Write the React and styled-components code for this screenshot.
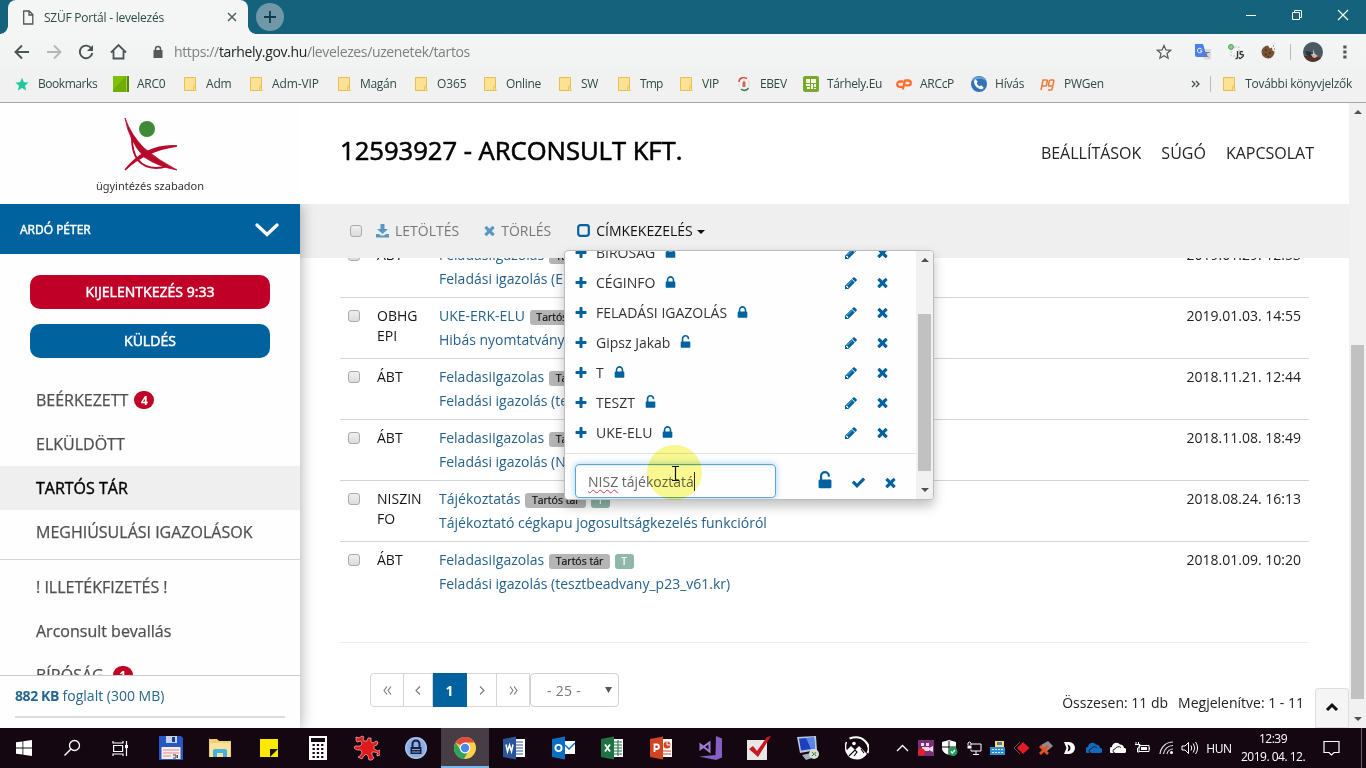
import React from 'react';
import styled, { createGlobalStyle, css } from 'styled-components';

const BLUE = '#0063a0';
const RED = '#c00027';

const Global = createGlobalStyle`
  * { box-sizing: border-box; }
  html, body { margin: 0; padding: 0; overflow: hidden; }
  body { font-family: "Open Sans", "Noto Sans", sans-serif; font-size: 14px; color: #222; background: #fff; }
  svg { display: block; flex: none; }
`;

const heavy = css`-webkit-text-stroke: ${p => p.$stroke || 0.5}px currentColor;`;

const Screen = styled.div`
  width: 1366px; height: 768px; display: flex; flex-direction: column; overflow: hidden; position: relative;
`;

/* ---------- browser window ---------- */
const TabStrip = styled.div`
  height: 34px; flex: none; background: #14627b; display: flex; align-items: stretch; padding-left: 8px;
`;
const Tab = styled.div`
  width: 240px; background: #f4f5f5; border-radius: 8px 8px 0 0; display: flex; align-items: center;
  padding: 0 10px 0 14px; font-size: 12px; color: #2c4a44; position: relative;
  &::before, &::after {
    content: ''; position: absolute; bottom: 0; width: 8px; height: 8px;
  }
  &::before { left: -8px; background: radial-gradient(circle at 0 0, #14627b 7.5px, #f4f5f5 8px); }
  &::after { right: -8px; background: radial-gradient(circle at 100% 0, #14627b 7.5px, #f4f5f5 8px); }
`;
const TabTitle = styled.span`flex: 1; margin-left: 10px; letter-spacing: -0.23px; white-space: nowrap;`;
const NewTab = styled.div`
  width: 28px; height: 28px; border-radius: 50%; background: #7098a9; margin: 3px 0 0 8px;
  display: flex; align-items: center; justify-content: center;
`;
const WindowControls = styled.div`
  margin-left: auto; display: flex; height: 29px; align-items: center; margin-right: 17px; gap: 34px;
`;
const AddressBar = styled.div`
  height: 35px; flex: none; background: linear-gradient(#f4f5f5, #f1f2f2); display: flex; align-items: center; padding: 0 8px 0 14px;
`;
const NavIcons = styled.div`display: flex; gap: 16px; align-items: center;`;
const SiteInfo = styled.div`width: 24px; margin-left: 18px; display: flex; justify-content: center;`;
const Url = styled.div`
  margin-left: 4px; font-size: 14px; color: #7c8080; letter-spacing: -0.36px; white-space: nowrap;
  b { font-weight: 400; color: #202526; }
`;
const Extensions = styled.div`margin-left: auto; display: flex; align-items: center; height: 35px;`;
const ExtSlot = styled.div`width: ${p => p.$w}px; display: flex; align-items: center; justify-content: center;`;
const Divider = styled.i`width: 1px; height: 16px; background: #b9bcbc; flex: none;`;
const BookmarkBar = styled.div`
  height: 34px; flex: none; background: #f1f1f1; border-bottom: 1px solid #a5a5a5; display: flex;
  padding: 0 0 4px 14px; align-items: center; font-size: 12px; color: #2d4b45;
`;
const Bookmark = styled.div`
  width: ${p => (p.$w ? p.$w + 'px' : 'auto')}; display: flex; align-items: center; white-space: nowrap;
  letter-spacing: ${p => p.$ls || -0.3}px; flex: none;
  svg { margin-right: 8px; }
`;
const BookmarkTail = styled.div`
  margin-left: auto; display: flex; align-items: center; padding-right: 14px; gap: 10px;
`;

/* ---------- portal ---------- */
const Viewport = styled.div`flex: 1; display: flex; min-height: 0; background: #fff;`;
const Sidebar = styled.aside`
  width: 300px; flex: none; display: flex; flex-direction: column; position: relative; z-index: 2; background: #fefefe;
`;
const LogoBox = styled.div`
  height: 101px; flex: none; display: flex; flex-direction: column; align-items: center; padding-top: 14px;
  svg { margin-left: 2px; }
`;
const LogoText = styled.div`
  font-family: "Noto Sans", sans-serif; font-size: 11px; color: #333; line-height: 14px; margin-top: 6px;
`;
const SideBody = styled.div`
  flex: 1; min-height: 0; display: flex; flex-direction: column; box-shadow: 0 0 14px rgba(0,0,0,.35); clip-path: inset(0 -20px 0 0);
  background: #fefefe;
`;
const UserBar = styled.div`
  height: 50px; flex: none; background: ${BLUE}; color: #fff; font-size: 12px; display: flex; align-items: center;
  justify-content: space-between; padding: 1px 21px 0 20px; ${heavy}
`;
const SideScroll = styled.div`flex: 1; min-height: 0; overflow: hidden; padding-top: 21px;`;
const SideButton = styled.div`
  margin: 0 30px 15px; height: 34px; border-radius: 10px; background: ${p => p.$bg}; color: #fff; display: flex;
  align-items: center; justify-content: center; font-size: 14px; letter-spacing: 0.04px; padding-bottom: 1px; ${heavy}
`;
const SideList = styled.div`
  padding: ${p => p.$top}px 0 ${p => p.$bottom || 0}px; border-bottom: ${p => (p.$line ? '1px solid #d5d5d5' : '0')};
`;
const SideItem = styled.div`
  height: 44px; padding-left: 36px; display: flex; align-items: center; font-size: 16px; white-space: nowrap;
  color: ${p => (p.$on ? '#000' : '#505050')}; background: ${p => (p.$on ? '#efefef' : 'none')}; ${heavy}
`;
const Count = styled.span`
  min-width: 20px; height: 18px; border-radius: 9px; background: ${RED}; color: #fff; font-size: 12px; font-weight: 700;
  display: flex; align-items: center; justify-content: center; margin-left: ${p => p.$gap}px; -webkit-text-stroke: 0;
`;
const Quota = styled.div`
  height: 53px; flex: none; border-top: 1px solid #ccc; padding: 10px 15px 0; font-size: 14px; color: #27668f; line-height: 20px;
  b { font-weight: 700; letter-spacing: -0.4px; }
`;
const QuotaBar = styled.div`height: 2px; margin-top: 10px; background: #dcdcdc;`;

const Main = styled.main`flex: 1; min-width: 0; display: flex; flex-direction: column; position: relative;`;
const Header = styled.header`
  height: 101px; flex: none; display: flex; align-items: center; justify-content: space-between; padding: 0 35px 4px 40px;
`;
const Title = styled.h1`margin: 0; padding-bottom: 2px; font-weight: 400; font-size: 25.6px; color: #000; white-space: nowrap; ${heavy}`;
const TopLinks = styled.nav`display: flex; gap: 20px; font-size: 16px; color: #222; padding-top: 3px;`;
const ActionBar = styled.div`
  height: 54px; flex: none; background: #efefef; display: flex; align-items: center; padding: 0 0 1px 50px; color: #757575;
`;
const Action = styled.div`
  display: flex; align-items: center; margin-left: ${p => p.$ml}px; color: ${p => (p.$on ? '#111' : '#777')};
  svg { margin-right: ${p => p.$gap}px; }
`;
const Caret = styled.i`
  border: 4px solid transparent; border-top-color: #111; border-bottom: 0; margin-left: 4px; margin-top: 3px;
`;
const Check = styled.span`
  width: 12px; height: 12px; border: 1px solid #aaa; border-radius: 3px; background: linear-gradient(#efefef, #dcdcdc); flex: none;
`;
const ListArea = styled.section`flex: 1; min-height: 0; overflow: hidden; padding: 0 40px;`;
const Rows = styled.div`margin-top: -21px; height: 406px; border-bottom: 1px solid #ececec;`;
const Row = styled.div`
  height: 61px; display: flex; padding: 8px 8px 0; border-bottom: ${p => (p.$last ? '0' : '1px solid #d4d4d4')};
`;
const Sender = styled.div`
  width: 62px; margin-left: 17px; line-height: 20px; color: #151515; word-break: break-all; padding-right: 14px; white-space: pre-line;
`;
const RowCheck = styled(Check)`margin-top: 4px;`;
const Subject = styled.div`flex: 1; color: #27628c; line-height: 24px; margin-top: -2px; white-space: nowrap;`;
const SubjectLine = styled.div`display: flex; height: 24px; align-items: center;`;
const Tag = styled.span`
  height: 15px; border-radius: 3px; margin: 3px 0 0 5px; background: ${p => (p.$green ? '#8fb8a9' : '#b5b5b5')};
  color: ${p => (p.$green ? '#fff' : '#111')}; font-size: 10.5px; line-height: 15px; padding: 0 6.5px; -webkit-text-stroke: .2px currentColor;
`;
const When = styled.div`line-height: 20px; color: #222;`;
const Footer = styled.div`display: flex; padding: 30px 0 0 30px; align-items: flex-start;`;
const Pager = styled.div`
  display: flex; height: 34px; border: 1px solid #d6d6d6; border-radius: 4px 0 0 4px; background: #fff;
`;
const PageCell = styled.div`
  width: ${p => p.$w}px; display: flex; align-items: center; justify-content: center; color: #777;
  border-right: ${p => (p.$end ? '0' : '1px solid #d6d6d6')};
  ${p => p.$on && css`background: ${BLUE}; color: #fff; margin: -1px 0; font-weight: 700; border-color: ${BLUE};`}
`;
const PageSize = styled.div`
  width: 89px; height: 34px; border: 1px solid #d0d0d0; border-radius: 4px; display: flex; align-items: center; color: #777;
  padding: 1px 6px 0 16px; justify-content: space-between; letter-spacing: .3px;
  svg { margin-bottom: 2px; }
`;
const Totals = styled.div`margin: 20px 5px 0 auto; display: flex; gap: 10px; line-height: 20px; color: #222;`;
const ToTop = styled.div`
  position: absolute; right: 0; bottom: 0; width: 34px; height: 40px; background: #f5f5f5; border: 1px solid #dedede;
  border-radius: 3px 3px 0 0; display: flex; align-items: center; justify-content: center; padding-bottom: 3px;
`;
const ScrollTrack = styled.div`
  width: ${p => p.$w}px; flex: none; background: #f1f1f1; display: flex; flex-direction: column; align-items: center;
  padding: ${p => p.$pad};
`;
const Arrow = styled.i`
  border: 4px solid transparent; ${p => (p.$down
    ? css`border-top-color: #505050; border-bottom: 0;`
    : css`border-bottom-color: #505050; border-top: 0;`)}
`;
const Thumb = styled.div`width: 13px; height: ${p => p.$h}px; margin: ${p => p.$top}px 0 auto; background: #c1c1c1;`;

/* ---------- label drop-down ---------- */
const Menu = styled.div`
  position: absolute; left: 264px; top: 147px; width: 370px; height: 250px; background: #fefefe; border: 1px solid #bcbcbc;
  border-radius: 4px; box-shadow: 0 6px 12px rgba(0,0,0,.25); display: flex; z-index: 3; overflow: hidden;
`;
const MenuBody = styled.div`flex: 1; min-width: 0; height: 248px; overflow: hidden;`;
const MenuItems = styled.div`margin-top: -13px; padding-bottom: 5px; border-bottom: 1px solid #e2e2e2;`;
const MenuItem = styled.div`
  height: 30px; display: flex; align-items: center; padding: 0 26px 1px 9px; color: #333; white-space: nowrap;
`;
const MenuLabel = styled.span`margin: 0 8px 0 8px; padding-bottom: 1px;`;
const MenuTools = styled.span`margin-left: auto; display: flex; gap: 17px; align-items: center;`;
const EditLine = styled.div`display: flex; align-items: center; padding: 10px 18px 0 10px;`;
const Field = styled.div`
  width: 201px; height: 34px; border: 1px solid #5ba6d8; border-radius: 4px; color: #666; padding: 7px 0 0 12px;
  box-shadow: 0 0 7px rgba(102,175,233,.6), inset 0 1px 1px rgba(0,0,0,.08); line-height: 20px; white-space: nowrap; display: flex;
  u { text-decoration: underline wavy #d23a4a 1px; text-underline-offset: 2px; }
`;
const TextCaret = styled.i`width: 1px; height: 19px; background: #333;`;
const EditTools = styled.div`margin-left: auto; display: flex; gap: 17px; align-items: center; padding-top: 3px;`;
const OpenLock = styled.span`padding-bottom: 4px; margin-right: -1px;`;
const Halo = styled.div`
  position: absolute; left: 647px; top: 445px; width: 55px; height: 55px; border-radius: 50%; z-index: 5;
  background: rgb(250,249,145); mix-blend-mode: multiply;
`;
const Pointer = styled.div`position: absolute; left: 670px; top: 465px; z-index: 6;`;

/* ---------- taskbar ---------- */
const Taskbar = styled.div`height: 40px; flex: none; background: #150711; display: flex; align-items: stretch; color: #fff;`;
const Slot = styled.div`
  width: ${p => p.$w}px; display: flex; align-items: center; justify-content: center; flex: none;
  ${p => p.$on && css`background: #463d45; border-bottom: 2px solid #76b9ed; padding-top: 2px;`}
`;
const Tray = styled.div`display: flex; margin-left: 9px;`;
const Lang = styled.div`width: 36px; display: flex; align-items: center; justify-content: center; font-size: 12px; letter-spacing: -.3px;`;
const Clock = styled.div`
  width: 72px; display: flex; flex-direction: column; align-items: center; justify-content: center; font-size: 12px;
  line-height: 18px; letter-spacing: -.5px; white-space: nowrap;
`;
const ShowDesktop = styled.div`margin-left: auto; width: 5px; border-left: 1px solid #6a6168;`;

/* ---------- icons ---------- */
const SOLID = {
  times: 'M1490 1322q0 40-28 68l-136 136q-28 28-68 28t-68-28l-294-294-294 294q-28 28-68 28t-68-28l-136-136q-28-28-28-68t28-68l294-294-294-294q-28-28-28-68t28-68l136-136q28-28 68-28t68 28l294 294 294-294q28-28 68-28t68 28l136 136q28 28 28 68t-28 68l-294 294 294 294q28 28 28 68z',
  plus: 'M1600 736v192q0 40-28 68t-68 28h-416v416q0 40-28 68t-68 28h-192q-40 0-68-28t-28-68v-416h-416q-40 0-68-28t-28-68v-192q0-40 28-68t68-28h416v-416q0-40 28-68t68-28h192q40 0 68 28t28 68v416h416q40 0 68 28t28 68z',
  lock: 'M640 768h512v-192q0-106-75-181t-181-75-181 75-75 181v192zm832 96v576q0 40-28 68t-68 28h-960q-40 0-68-28t-28-68v-576q0-40 28-68t68-28h32v-192q0-184 132-316t316-132 316 132 132 316v192h32q40 0 68 28t28 68z',
  unlock: 'M1376 768q40 0 68 28t28 68v576q0 40-28 68t-68 28h-960q-40 0-68-28t-28-68v-576q0-40 28-68t68-28h32v-320q0-185 131.5-316.5t316.5-131.5 316.5 131.5 131.5 316.5q0 26-19 45t-45 19h-64q-26 0-45-19t-19-45q0-106-75-181t-181-75-181 75-75 181v320h736z',
  pencil: 'M491 1536l91-91-235-235-91 91v107h128v128h107zm523-928q0-22-22-22-10 0-17 7l-542 542q-7 7-7 17 0 22 22 22 10 0 17-7l542-542q7-7 7-17zm-54-192l416 416-832 832h-416v-416zm683 96q0 53-37 90l-166 166-416-416 166-165q36-38 90-38 53 0 91 38l235 234q37 39 37 91z',
  check: 'M1671 566q0 40-28 68l-724 724-136 136q-28 28-68 28t-68-28l-136-136-362-362q-28-28-28-68t28-68l136-136q28-28 68-28t68 28l294 295 656-657q28-28 68-28t68 28l136 136q28 28 28 68z',
};
const Solid = ({ name, size = 14, color = BLUE }) => (
  <svg width={size} height={size} viewBox="0 0 1792 1792" fill={color}><path d={SOLID[name]} /></svg>
);
const Svg = ({ w = 16, h, children, box }) => (
  <svg width={w} height={h || w} viewBox={box || `0 0 ${w} ${h || w}`} fill="none">{children}</svg>
);
const Line = ({ d, c = '#fff', s = 1, ...rest }) => <path d={d} stroke={c} strokeWidth={s} {...rest} />;

const Folder = () => (
  <Svg><path d="M2.500 1.500h11v13h-11z" fill="#fde293" stroke="#e5bf52" /><path d="M11.500 14.500v-4l1-1 1.800 5z" fill="#fde293" stroke="#e5bf52" strokeWidth=".8" /></Svg>
);
const BookmarkIcon = {
  star: <Svg><path d="M8 1.800l1.900 4.400 4.700.4-3.600 3.200 1.100 4.700L8 12l-4.100 2.500L5 9.800 1.400 6.600l4.700-.4z" fill="#1fc9a0" /></Svg>,
  arc: <Svg><path d="M0 0h16v16H0z" fill="#6fae00" /><path d="M0 0h13L0 14z" fill="#7fc008" /><path d="M13 0h1v16h-1z" fill="#a5cf5c" /><path d="M14 0h2v16h-2z" fill="#528a00" /></Svg>,
  ebev: <Svg><path d="M3 6C3 2 7 .5 11 2.500" stroke="#d2463c" strokeWidth="1.400" /><path d="M12 4c1.500 3 1.500 5 .5 7M3 7c-.5 2 0 3 .5 4" stroke="#dcdedc" strokeWidth="1.200" /><path d="M5 13c2 2 5.500 2 7.500-1" stroke="#2f8b57" strokeWidth="1.600" /><path d="M6.500 6.500L8 4.500l1.500 2V11h-3z" fill="#cf6a58" /></Svg>,
  tarhely: <Svg><rect width="16" height="16" rx="2" fill="#7aa82c" /><path d="M3 3h4v4H3zM8 3h5v4H8zM3 8h4v2H3zM4 11h3v2H4zM8 8h2v5H8zM11 8h2v3h-2zM11 12h2v1h-2z" fill="#f2f8e2" /></Svg>,
  cp: <Svg><path d="M6.500 5.500H4a2.700 2.700 0 0 0 0 5.400h1.500M7 12.500l2-8h3.300a2.400 2.400 0 0 1 0 4.900H10" stroke="#ff6c2c" strokeWidth="2.300" strokeLinecap="round" strokeLinejoin="round" /></Svg>,
  call: <Svg><circle cx="8" cy="8" r="8" fill="#3272b8" /><path d="M1 5a8 8 0 0 1 14 0C10 1 5 3 1 5z" fill="#6fa4da" /><path d="M4.500 3.200l2.300 2.600-1.100 1.400c.6 1.400 1.700 2.500 3.200 3.100l1.500-1 2.300 2.400c-1 1.600-3 1.900-5 .9C4.700 11 3 8.200 3 5.800c0-1.100.7-2.100 1.500-2.600z" fill="#fff" /></Svg>,
  pg: <Svg><path d="M1 14L3 4h3.500q1 0 .8 1l-.8 4q-.2 1-1.200 1H2M14 4h-3.500q-1 0-1.200 1l-.8 4q-.2 1 .8 1H13m1-6l-1.700 8.500q-.3 1.500-1.500 1.500H8" stroke="#f07a35" strokeWidth="1.500" /></Svg>,
  folder: <Folder />,
};

const BOOKMARKS = [
  ['star', 'Bookmarks', 99, -0.45], ['arc', 'ARC0', 69], ['folder', 'Adm', 66, -0.2], ['folder', 'Adm-VIP', 88, -0.1], ['folder', 'Magán', 77, -0.3],
  ['folder', 'O365', 69, -0.1], ['folder', 'Online', 75, -0.3], ['folder', 'SW', 59, -0.4], ['folder', 'Tmp', 62, -0.8],
  ['folder', 'VIP', 58, -0.2], ['ebev', 'EBEV', 67, -0.4], ['tarhely', 'Tárhely.Eu', 93, -0.35], ['cp', 'ARCcP', 75, -0.3],
  ['call', 'Hívás', 69, -0.2], ['pg', 'PWGen', 80, -0.25],
];

const MAIL = [
  ['ÁBT', 'FeladasiIgazolas', 'Feladási igazolás (ERK)', '2019.01.29. 12:53', []],
  ['OBHG\nEPI', 'UKE-ERK-ELU', 'Hibás nyomtatvány', '2019.01.03. 14:55', []],
  ['ÁBT', 'FeladasiIgazolas', 'Feladási igazolás (tes', '2018.11.21. 12:44', []],
  ['ÁBT', 'FeladasiIgazolas', 'Feladási igazolás (NY)', '2018.11.08. 18:49', []],
  ['NISZIN\nFO', 'Tájékoztatás', 'Tájékoztató cégkapu jogosultságkezelés funkcióról', '2018.08.24. 16:13', ['T']],
  ['ÁBT', 'FeladasiIgazolas', 'Feladási igazolás (tesztbeadvany_p23_v61.kr)', '2018.01.09. 10:20', ['T']],
];

const LABELS = [
  ['BÍRÓSÁG', 'lock'], ['CÉGINFO', 'lock'], ['FELADÁSI IGAZOLÁS', 'lock'], ['Gipsz Jakab', 'unlock'],
  ['T', 'lock'], ['TESZT', 'unlock'], ['UKE-ELU', 'lock'],
];

const Office = ({ c, light, mark, extra }) => (
  <Svg w={24}>
    {light}
    <path d="M1 3l13-2.500v23L1 21z" fill={c} />
    {mark}
    {extra}
  </Svg>
);

const APPS = [
  [48, <Svg w={16}><path d="M0 2.300l6.500-.9v6.200H0zM7.300 1.300L16 0v7.600H7.300zM0 8.400h6.500v6.200L0 13.700zM7.300 8.400H16V16l-8.700-1.200z" fill="#fff" /></Svg>],
  [48, <Svg w={18}><circle cx="11.500" cy="6.500" r="5" stroke="#fff" strokeWidth="1.300" /><Line d="M8 10L1.500 16.500" s={1.4} /></Svg>],
  [48, <Svg w={17}><path d="M1 1v2h10V1M1 16v-2h10v2" stroke="#fff" strokeWidth="1.200" /><path d="M1.600 5.500h9v6h-9zM14.500 1v15" stroke="#fff" strokeWidth="1.200" /><path d="M13 5h3v3h-3z" fill="#fff" /></Svg>],
  [54, <Svg w={24}><path d="M0 0h22l2 2v22H0z" fill="#2657c4" /><path d="M7 0h11v7H7z" fill="#c7d3ea" /><path d="M13 1h3v5h-3z" fill="#1d3d91" /><path d="M2.500 11h19v12h-19z" fill="#f8eeee" /><path d="M4 14h16M4 17h16M4 20h8" stroke="#d98b8b" /><path d="M14 19h3v3h-3M18.500 19v3" stroke="#444" /></Svg>],
  [44, <Svg w={22} h={20}><path d="M0 1h8l2 2h12v16H0z" fill="#f3cf74" /><path d="M1 5h20v14H1z" fill="#fbe29b" /><path d="M4 19v-6q0-2 2-2h10q2 0 2 2v6h-4v-4H8v4z" fill="#3fb2e0" /></Svg>],
  [54, <Svg w={18}><path d="M0 0h18v18H0z" fill="#fde900" /><path d="M10 18v-8h8z" fill="#1a1305" /></Svg>],
  [44, <Svg w={18} h={24}><path d="M0 0h18v24H0z" fill="#fff" /><path d="M2 2h14v4H2z" fill="#150711" /><path d="M3.500 9h11M3.500 13h11M3.500 17h11M3.500 21h11" stroke="#150711" strokeWidth="2" strokeDasharray="2.300 2" /></Svg>],
  [54, <Svg w={26}><path d="M2 2l3 1 3-2 2 1-1 2 1 2h3l1-3 3 0 0 4 2 1 3-2 2 1-1 3-3 1 0 3 4 2 2-1 0 5-3 1 0-2 1-1-4-1-2 0 0 3 2 3-2 2-3 0-1-4-2-2-3 3-1 2-4-2 2-1 2-3-1-3-4 0-3-2 1-2 5 0 2-2-1-3-4 1-1-2z" fill="#e0191c" stroke="#f5b9b9" strokeWidth=".7" /></Svg>],
  [44, <Svg w={22}><circle cx="11" cy="11" r="11" fill="#a9c4ee" /><circle cx="11" cy="11" r="9.500" fill="#8caee6" /><path d="M5.500 10h11v7h-11z" fill="#17233a" /><path d="M7.500 10V7a3.500 3.500 0 0 1 7 0v3" stroke="#17233a" strokeWidth="2" /><path d="M7 12.500h8M7 15h8" stroke="#8aa5cf" /></Svg>],
];
const CHROME = (
  <Svg w={24}><circle cx="12" cy="12" r="11" fill="#ffd04b" /><path d="M12 12L2.500 6.500A11 11 0 0 1 21.500 6.500H12z" fill="#e04b3d" /><path d="M2.500 6.500A11 11 0 0 0 11 23l4.500-8.500-7.500 0z" fill="#2da45a" /><circle cx="12" cy="12" r="5.400" fill="#fff" /><circle cx="12" cy="12" r="4.200" fill="#4a87ee" /></Svg>
);
const APPS2 = [
  [49, <Office c="#2a5699" light={<><path d="M13 3h10v18H13z" fill="#fff" /><path d="M14 6h7M14 9h7M14 12h7M14 15h7M14 18h7" stroke="#2a5699" /></>} mark={<Line d="M4 8.500l1.500 7L7.500 9l2 6.500L11 8.500" s={1.5} />} />],
  [49, <Office c="#0a6fc2" light={<path d="M12 5h12v13H12z" fill="#fff" />} mark={<circle cx="7.500" cy="12" r="3.100" stroke="#fff" strokeWidth="1.900" />} extra={<Line d="M14 9l4 4 6-6" c="#0a6fc2" s={1.5} />} />],
  [49, <Office c="#1f7244" light={<><path d="M13 3h10v18H13z" fill="#fff" /><path d="M14 6h8M14 9h8M14 12h8M14 15h8M14 18h8M18 4v16" stroke="#1f7244" /></>} mark={<Line d="M5 8.500l5 7M10 8.500l-5 7" s={1.8} />} />],
  [49, <Office c="#d04423" light={<><path d="M13 3h10v18H13z" fill="#fff" /><path d="M14 15h8M14 18h8" stroke="#d04423" /><circle cx="18" cy="9" r="3.500" fill="#d04423" /><path d="M18 9V5.500M18 9h3.500" stroke="#fff" /></>} mark={<Line d="M5.500 16V8.500h2.200a2.200 2.200 0 0 1 0 4.500H5.500" s={1.8} />} />],
  [49, <Svg w={24}><path d="M18 0l6 2.500v19L18 24 1 20.500 17.500 19z" fill="#865fc5" /><path d="M2.500 8.500l9 7v-9l-9 6.500z" stroke="#a37ad8" strokeWidth="2" /></Svg>],
  [49, <Svg w={24}><path d="M0 4h20v20H0z" fill="#e9e7e5" /><path d="M2 13l4-3 4 5L20 1l4-1-13 21z" fill="#c8171e" /></Svg>],
  [49, <Svg w={24}><path d="M1 1l19-1 1 14-17 3z" fill="#b9c9de" /><path d="M3 2.500l15-1 1 11-14 2z" fill="#1d3fc0" /><path d="M10 2l8-.5 1 11-4 .5z" fill="#5a86ea" /><path d="M6 19l9-2 4 4-9 3z" fill="#9fb0bf" /><circle cx="18" cy="18" r="5" fill="#d5dfd4" /><path d="M16 16l2 2-2 2m4-4l-1.500 2 1.500 2" stroke="#4a7c4c" /></Svg>],
  [49, <Svg w={24}><path d="M4.500 2.500Q14-1 20 5t2.500 12" stroke="#fff" strokeWidth="2" /><path d="M1.500 6Q-.5 10 1.500 16" stroke="#fff" strokeWidth="1.500" /><path d="M1 15l5-5 4 4 4-4 8 8q-4 5.500-10 5.500-8 0-11-7z" fill="#fff" /><circle cx="9" cy="7.500" r="1.800" fill="#fff" /><path d="M4 20l6-6 2 2-3 4M16 13l3 4" stroke="#150711" strokeWidth="1.200" /></Svg>],
];

const TRAY = [
  [24, <Svg w={13} h={8}><Line d="M1 7l5.500-5.500L12 7" s={1.3} /></Svg>],
  [24, <Svg><path d="M0 0h16v16H0z" fill="#7b2f74" /><path d="M3 3h3v3H3zM8 3h3v3H8zM4 7h7v4H4zM11 8l4-2v6l-4-2z" fill="#f3d8ee" /><circle cx="3.500" cy="12" r="3.500" fill="#e32222" /></Svg>],
  [24, <Svg><path d="M7 0l7 2v6c0 4-4 6-7 7-3-1-7-3-7-7V2z" fill="#fff" /><path d="M7 1v14M0 7h14" stroke="#150711" /><circle cx="11" cy="11.500" r="4.500" fill="#1f9b54" /><Line d="M9 11.500l1.500 1.500 2.500-3" s={1.2} /></Svg>],
  [24, <Svg><path d="M5 4h10v7H5zM10 11v3M7 14.500h6" stroke="#fff" /><path d="M1 5h5v4H1z" fill="#fff" stroke="#150711" /><path d="M2 5V3q1.500-2 3 0v2" stroke="#fff" /></Svg>],
  [24, <Svg><path d="M5 1h9v8H5z" fill="#f5df7a" /><path d="M7 2h5v3H7z" fill="#5d7a9c" /><path d="M0 7h15v8H0z" fill="#2f8ed0" /><path d="M2 9.500h11M2 12.500h11" stroke="#d6ebf8" strokeDasharray="2 1" /></Svg>],
  [24, <Svg><path d="M6 2L0 8l6 6" stroke="#6b5055" /><path d="M9 2l6.500 6L9 14 3 8z" fill="#e01c24" /></Svg>],
  [23, <Svg><path d="M3 5l7-4 5 5-7 6z" fill="#8c8c8c" /><path d="M2 6l8 8M10 6l-8 8" stroke="#e8521e" strokeWidth="2.800" /></Svg>],
  [24, <Svg><path d="M3 2h5a6 6 0 0 1 0 12H3l2.500-6z" fill="#fff" /><path d="M6.500 4.500q3 1 3 3.500t-3 3.500l1-3.500z" fill="#150711" /></Svg>],
  [25, <Svg><path d="M2 13a3 3 0 0 1 0-6 4.500 4.500 0 0 1 8-2.500 4 4 0 0 1 4 3.500 2.500 2.500 0 0 1 0 5z" fill="#0f6cbd" /><path d="M5 13a2 2 0 0 1 0-4 4 4 0 0 1 6-1.500" stroke="#150711" strokeWidth=".8" /></Svg>],
  [24, <Svg><path d="M2 13a3 3 0 0 1 0-6 4.500 4.500 0 0 1 8-2.500 4 4 0 0 1 4 3.500 2.500 2.500 0 0 1 0 5z" fill="#fff" /><path d="M5 13a2 2 0 0 1 0-4 4 4 0 0 1 6-1.500" stroke="#150711" strokeWidth=".9" /></Svg>],
  [24, <Svg><path d="M5 5.500h10v6H5zM15.500 7.500v2M2 2v2M4.500 2v2M1 4.500h5V6q0 2-2.500 2M3.500 8v4H5" stroke="#fff" /><path d="M7 7h6v3H7z" fill="#fff" /></Svg>],
  [25, <Svg><path d="M1 14A13 13 0 0 1 14 2M4.500 14A9.500 9.500 0 0 1 14 5.500M8 14a6 6 0 0 1 6-5" stroke="#ddd" strokeWidth="1.200" /><circle cx="12.500" cy="12.500" r="1.500" fill="#fff" /></Svg>],
  [22, <Svg w={18} h={16}><path d="M1 6h3l3.500-3.500v11L4 10H1z" stroke="#fff" /><path d="M10 5.500q1.500 2.500 0 5M12.300 3.500q3 4.500 0 9M14.600 2q4 6 0 12" stroke="#fff" /></Svg>],
];

const PageArrow = ({ d, w }) => <Svg w={w} h={9}><Line d={d} c="#777" s={1.1} /></Svg>;

function BrowserChrome() {
  return (
    <>
      <TabStrip>
        <Tab>
          <Svg w={12} h={15}><Line d="M1.700 1h5.500l3.600 3.600v9.400H1.700zM7 1v4h4" c="#50565a" s={1.3} /></Svg>
          <TabTitle>SZÜF Portál - levelezés</TabTitle>
          <Svg w={12}><Line d="M2 2l8 8M10 2l-8 8" c="#4c5f5c" s={1.5} /></Svg>
        </Tab>
        <NewTab><Svg w={12}><Line d="M6 0v12M0 6h12" c="#123a48" s={1.8} /></Svg></NewTab>
        <WindowControls>
          <Svg w={12}><Line d="M1 6.500h10" /></Svg>
          <Svg w={12}><Line d="M1.500 3.500h7v7h-7zM3.500 3.500v-2h7v7h-2" /></Svg>
          <Svg w={12}><Line d="M1 1l10 10M11 1L1 11" s={1.2} /></Svg>
        </WindowControls>
      </TabStrip>
      <AddressBar>
        <NavIcons>
          <Svg><Line d="M15 8H2M8 1.500L1.500 8 8 14.500" c="#4a5454" s={1.9} /></Svg>
          <Svg><Line d="M1 8h13M8 1.500L14.500 8 8 14.500" c="#b5b7b7" s={1.9} /></Svg>
          <Svg><Line d="M13.400 4.500A6.300 6.300 0 1 0 14.300 9" c="#4a5454" s={1.9} /><path d="M15 1v6H9z" fill="#4a5454" /></Svg>
          <Svg w={18}><Line d="M1 9.500L8.500 2 16 9.500M3.500 8v7.500h10V8" c="#4a5454" s={1.8} /></Svg>
        </NavIcons>
        <SiteInfo><Svg w={12} h={14}><path d="M2 5h8.500v8H1.500V5z" fill="#55595c" /><Line d="M3.500 6V4a2.500 2.500 0 0 1 5 0v2" c="#55595c" s={1.5} /></Svg></SiteInfo>
        <Url>https://<b>tarhely.gov.hu</b>/levelezes/uzenetek/tartos</Url>
        <Extensions>
          <ExtSlot $w={39}><Svg><path d="M8 1.500l1.900 4.400 4.700.4-3.600 3.200 1.100 4.700L8 11.700l-4.100 2.500L5 9.500 1.400 6.300l4.700-.4z" stroke="#5a6060" strokeWidth="1.300" /></Svg></ExtSlot>
          <ExtSlot $w={39}><Svg><path d="M7 5h9v10.500H9z" fill="#d7dade" /><path d="M0 0h8l4 13H2q-2 0-2-2z" fill="#4a80e8" /><path d="M6.800 5.500A2.300 2.300 0 1 0 7 7H5" stroke="#fff" /><path d="M9.500 8.500h5M12 8q0 3-2 5m.5-3q1 2 3 3" stroke="#6c7480" /></Svg></ExtSlot>
          <ExtSlot $w={27}><Svg><path d="M3 3h8v9H3z" stroke="#b9bdb9" strokeDasharray="2 1.500" /><circle cx="3" cy="3" r="2.400" fill="#8fd08f" stroke="#3f9d4b" /><path d="M9.500 7v6q0 2-2 1.500M15 8q-3-1.300-3 .7t2.500 2-.5 2.600-2.800-.3" stroke="#333" strokeWidth="1.300" /></Svg></ExtSlot>
          <ExtSlot $w={38}><Svg w={14}><path d="M7 .5l2 3 2-1 .5 3 2 1A6.500 6.500 0 1 1 7 .5z" fill="#7a5238" /><path d="M4 5h1.500M8 8h1.500M4 9.500h1.500M7 11.500h1" stroke="#3b2415" strokeWidth="1.500" /><path d="M12 1h1M13 4h1" stroke="#7a5238" /></Svg></ExtSlot>
          <ExtSlot $w={6}><Divider /></ExtSlot>
          <ExtSlot $w={39}><Svg w={20}><circle cx="10" cy="10" r="10" fill="#4b5a62" /><path d="M1 14a10 10 0 0 0 17 2q-8-3-17-2z" fill="#5b2f26" /><path d="M2 9q6 0 9 3l-2 3q-5 0-7-6z" fill="#26333b" /><path d="M8 12q4-1 7 2l-3 2q-3 0-4-4z" fill="#c7b6a8" /><path d="M10.500 7l1.500 6h-2z" fill="#c9cfd0" /></Svg></ExtSlot>
          <ExtSlot $w={26}><Svg w={4} h={16}><path d="M.3 1.500h3.200v3H.3zM.3 6.500h3.200v3H.3zM.3 11.500h3.200v3H.3z" fill="#4f5656" /></Svg></ExtSlot>
        </Extensions>
      </AddressBar>
      <BookmarkBar>
        {BOOKMARKS.map(([icon, text, w, ls]) => (
          <Bookmark key={text} $w={w} $ls={ls}>{BookmarkIcon[icon]}{text}</Bookmark>
        ))}
        <BookmarkTail>
          <Svg w={9} h={8}><Line d="M1 1l3 3-3 3M5 1l3 3-3 3" c="#4a5555" s={1.4} /></Svg>
          <Divider />
          <Bookmark $ls={-0.28}><Folder />További könyvjelzők</Bookmark>
        </BookmarkTail>
      </BookmarkBar>
    </>
  );
}

function SideColumn() {
  return (
    <Sidebar>
      <LogoBox>
        <Svg w={54} h={56}>
          <circle cx="23" cy="12" r="8" fill="#3f8a36" />
          <path d="M1 1q6 17 19 30Q34 43 53 53 35 50 20 40 5 24 1 1z" fill="#b7092c" stroke="#b7092c" strokeWidth=".8" />
          <path d="M53 29Q22 27 1 53q19-19 52-24z" fill="#b7092c" stroke="#b7092c" strokeWidth="1.500" />
          <path d="M8 21q0 29 24 30 6 0 11-2" stroke="#b7092c" strokeWidth="1.900" />
        </Svg>
        <LogoText>ügyintézés szabadon</LogoText>
      </LogoBox>
      <SideBody>
        <UserBar $stroke={0.45}>
          ARDÓ PÉTER
          <Svg w={24} h={14}><Line d="M2 2l10 9.500L22 2" s={3.2} strokeLinecap="round" /></Svg>
        </UserBar>
        <SideScroll>
          <SideButton $bg={RED}>KIJELENTKEZÉS 9:33</SideButton>
          <SideButton $bg={BLUE}>KÜLDÉS</SideButton>
          <SideList $top={5} $bottom={5} $line>
            <SideItem $stroke={0.25}>BEÉRKEZETT<Count $gap={6}>4</Count></SideItem>
            <SideItem $stroke={0.25}>ELKÜLDÖTT</SideItem>
            <SideItem $on $stroke={0.4}>TARTÓS TÁR</SideItem>
            <SideItem $stroke={0.25}>MEGHIÚSULÁSI IGAZOLÁSOK</SideItem>
          </SideList>
          <SideList $top={5}>
            <SideItem $stroke={0.25}>! ILLETÉKFIZETÉS !</SideItem>
            <SideItem $stroke={0.25}>Arconsult bevallás</SideItem>
            <SideItem $stroke={0.25}>BÍRÓSÁG<Count $gap={9}>1</Count></SideItem>
          </SideList>
        </SideScroll>
        <Quota><b>882 KB</b> foglalt (300 MB)<QuotaBar /></Quota>
      </SideBody>
    </Sidebar>
  );
}

function LabelMenu() {
  return (
    <Menu>
      <MenuBody>
        <MenuItems>
          {LABELS.map(([text, icon]) => (
            <MenuItem key={text}>
              <Solid name="plus" size={14} />
              <MenuLabel>{text}</MenuLabel>
              <Solid name={icon} size={15} />
              <MenuTools><Solid name="pencil" size={14} /><Solid name="times" size={15} /></MenuTools>
            </MenuItem>
          ))}
        </MenuItems>
        <EditLine>
          <Field><span><u>NISZ</u> tájékoztatá</span><TextCaret /></Field>
          <EditTools>
            <OpenLock><Solid name="unlock" size={20} /></OpenLock><Solid name="check" size={15} /><Solid name="times" size={15} />
          </EditTools>
        </EditLine>
      </MenuBody>
      <ScrollTrack $w={17} $pad="7px 0 7px"><Arrow /><Thumb $h={157} $top={52} /><Arrow $down /></ScrollTrack>
    </Menu>
  );
}

function Portal() {
  return (
    <Viewport>
      <SideColumn />
      <Main>
        <Header>
          <Title $stroke={0.6}>12593927 - ARCONSULT KFT.</Title>
          <TopLinks><span>BEÁLLÍTÁSOK</span><span>SÚGÓ</span><span>KAPCSOLAT</span></TopLinks>
        </Header>
        <ActionBar>
          <Check />
          <Action $ml={14} $gap={6}>
            <Svg w={13} h={14}><path d="M4.500 0h4v5h3.500L6.500 10 1 5h3.500zM0 10h3l2 1.500h3L10 10h3v3.500H0z" fill="#5b98c0" /></Svg>
            LETÖLTÉS
          </Action>
          <Action $ml={23} $gap={4}><Solid name="times" size={15} color="#5b98c0" />TÖRLÉS</Action>
          <Action $ml={26} $gap={6} $on>
            <Svg w={13}><rect x="1.200" y="1.200" width="10.600" height="10.600" rx="2.200" stroke={BLUE} strokeWidth="2.200" /></Svg>
            CÍMKEKEZELÉS<Caret />
          </Action>
        </ActionBar>
        <ListArea>
          <Rows>
            {MAIL.map(([from, type, subject, date, tags], i) => (
              <Row key={date} $last={i === MAIL.length - 1}>
                <RowCheck />
                <Sender>{from}</Sender>
                <Subject>
                  <SubjectLine>{type}<Tag>Tartós tár</Tag>{tags.map(t => <Tag key={t} $green>{t}</Tag>)}</SubjectLine>
                  <SubjectLine>{subject}</SubjectLine>
                </Subject>
                <When>{date}</When>
              </Row>
            ))}
          </Rows>
          <Footer>
            <Pager>
              <PageCell $w={33}><PageArrow w={9} d="M4 .5L1 4.500l3 4M8 .5L5 4.500l3 4" /></PageCell>
              <PageCell $w={29}><PageArrow w={6} d="M5 .5L1 4.500l4 4" /></PageCell>
              <PageCell $w={34} $on>1</PageCell>
              <PageCell $w={30}><PageArrow w={6} d="M1 .5l4 4-4 4" /></PageCell>
              <PageCell $w={32} $end><PageArrow w={9} d="M1 .5l3 4-3 4M5 .5l3 4-3 4" /></PageCell>
            </Pager>
            <PageSize>- 25 -<Svg w={7} h={6}><path d="M0 0h7L3.500 6z" fill="#555" /></Svg></PageSize>
            <Totals><span>Összesen: 11 db</span><span>Megjelenítve: 1 - 11</span></Totals>
          </Footer>
        </ListArea>
        <ToTop><Svg w={14} h={9}><Line d="M2 8l5-5 5 5" c="#111" s={3} /></Svg></ToTop>
        <LabelMenu />
      </Main>
      <ScrollTrack $w={17} $pad="7px 0 7px"><Arrow /><Thumb $h={354} $top={231} /><Arrow $down /></ScrollTrack>
    </Viewport>
  );
}

function WindowsTaskbar() {
  return (
    <Taskbar>
      {APPS.map(([w, icon], i) => <Slot key={i} $w={w}>{icon}</Slot>)}
      <Slot $w={3} />
      <Slot $w={48} $on>{CHROME}</Slot>
      {APPS2.map(([w, icon], i) => <Slot key={i} $w={w}>{icon}</Slot>)}
      <Tray>{TRAY.map(([w, icon], i) => <Slot key={i} $w={w}>{icon}</Slot>)}</Tray>
      <Lang>HUN</Lang>
      <Clock><span>12:39</span><span>2019. 04. 12.</span></Clock>
      <Slot $w={44}><Svg w={17}><Line d="M1 1.500h15v11h-5L8.500 15 6 12.500H1z" s={1.2} /></Svg></Slot>
      <ShowDesktop />
    </Taskbar>
  );
}

export default function App() {
  return (
    <>
      <Global />
      <Screen>
        <BrowserChrome />
        <Portal />
        <WindowsTaskbar />
        <Halo />
        <Pointer>
          <Svg w={11} h={17}><Line d="M2 1.500h3l.5.5.5-.5h3M5.500 2v13M2 15.500h3l.5-.5.5.5h3" c="#111" s={1.2} /></Svg>
        </Pointer>
      </Screen>
    </>
  );
}
